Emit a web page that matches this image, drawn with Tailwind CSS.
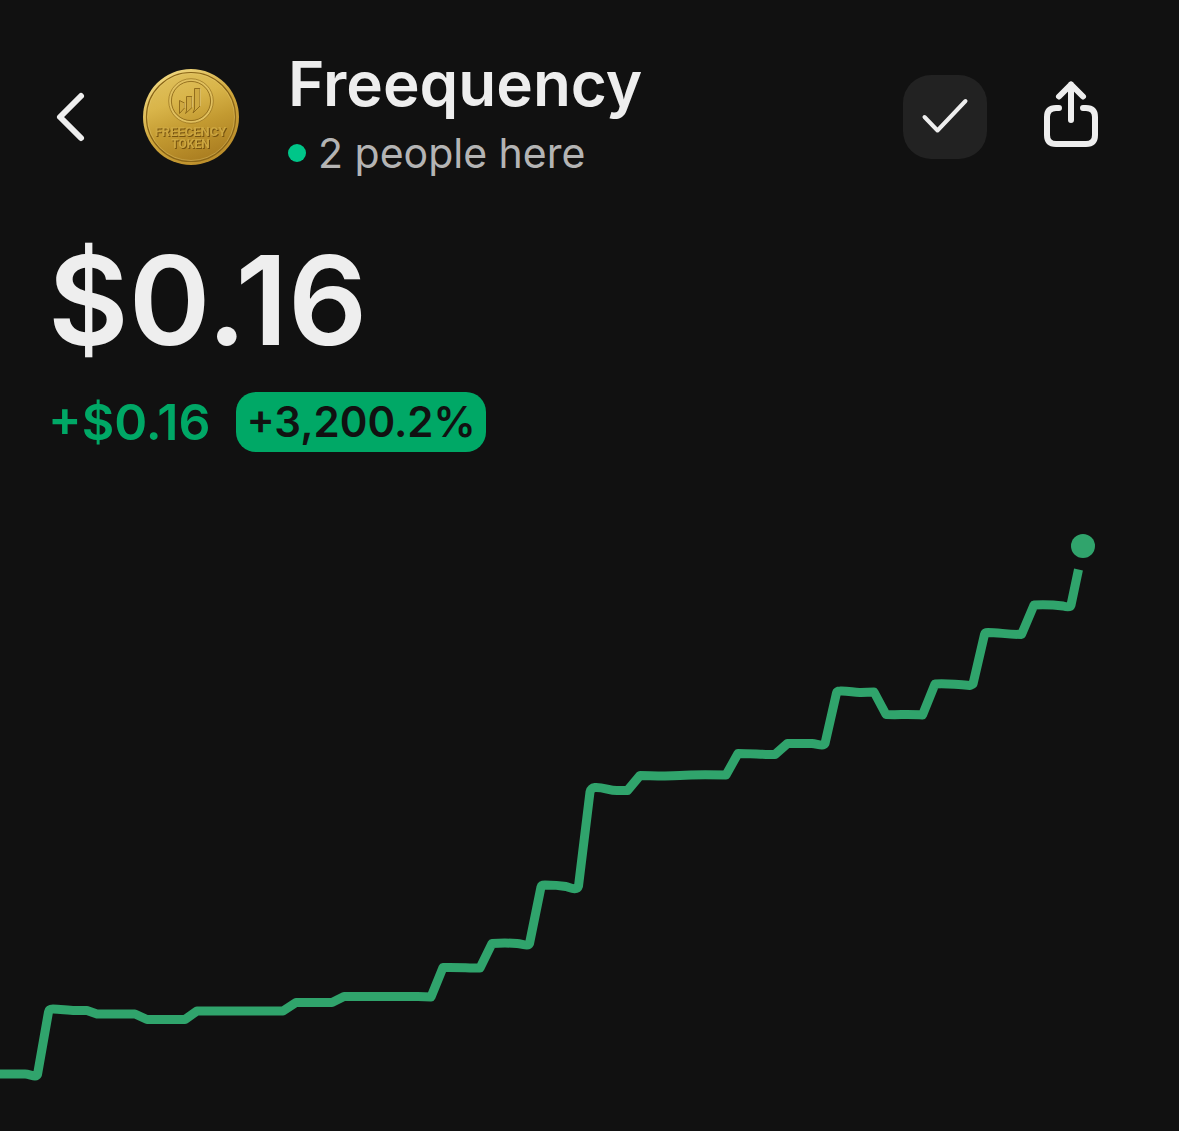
<!DOCTYPE html>
<html lang="en">
<head>
  <meta charset="UTF-8">
  <meta name="viewport" content="width=device-width, initial-scale=1.0">
  <title>Freequency</title>
  <script src="https://cdn.jsdelivr.net/npm/@tailwindcss/browser@4"></script>
</head>
<body class="bg-[#111111] text-[#eeeeee] font-['Inter','Liberation_Sans',sans-serif] overflow-x-hidden">
  <header class="flex items-center pt-12 pl-12 pr-16">
    <button type="button" aria-label="Back" class="shrink-0">
      <svg class="w-12 h-16" viewBox="0 0 48 64" fill="none" stroke="currentColor" stroke-width="6" stroke-linecap="round" stroke-linejoin="round">
        <path d="M33 11 L12 32 L33 53"/>
      </svg>
    </button>
    <!-- Token coin -->
    <svg class="ml-[46px] size-[98px] shrink-0" viewBox="0 0 98 98" role="img" aria-label="Freecency Token">
      <defs>
        <linearGradient id="gold" x1="0.3" y1="0" x2="0.65" y2="1">
          <stop offset="0" stop-color="#dfc05c"/>
          <stop offset="0.3" stop-color="#d9b54a"/>
          <stop offset="0.6" stop-color="#c39a31"/>
          <stop offset="1" stop-color="#a97c20"/>
        </linearGradient>
        <linearGradient id="rim" x1="0.2" y1="0" x2="0.8" y2="1">
          <stop offset="0" stop-color="#f3dc85"/>
          <stop offset="0.5" stop-color="#cfa63b"/>
          <stop offset="1" stop-color="#b98a28"/>
        </linearGradient>
      </defs>
      <circle cx="49" cy="49" r="48" fill="url(#rim)"/>
      <circle cx="49" cy="49" r="44.5" fill="url(#gold)" stroke="#8a6517" stroke-width="1.2"/>
      <circle cx="49" cy="49" r="43.5" fill="none" stroke="#ecd17a" stroke-opacity="0.5" stroke-width="0.7"/>
      <circle cx="49" cy="33" r="21" fill="none" stroke="#e0c05f" stroke-width="2.2"/>
      <circle cx="49" cy="33" r="22.3" fill="none" stroke="#8f6a1b" stroke-opacity="0.8" stroke-width="0.8"/>
      <circle cx="49" cy="33" r="19.6" fill="none" stroke="#8f6a1b" stroke-width="0.9"/>
      <g fill="#cfa941" stroke="#8a6518" stroke-width="0.9" stroke-linejoin="round">
        <path d="M37.500 32.500L42.500 35V40L37.500 45.500Z"/>
        <path d="M44.500 28.500H50V39.500L43.500 45.500L44.500 43Z"/>
        <path d="M52.500 20.500H58V38L51 45L52.500 41Z"/>
      </g>
      <path d="M42.800 35V40M50.400 28.500V39.500M58.400 20.500V38" stroke="#efd684" stroke-width="0.7"/>
      <g class="drop-shadow-[1px_1px_0_#765310]" font-family="Roboto, sans-serif" font-weight="700" text-anchor="middle" fill="#cda741">
        <text x="48.500" y="67.500" font-size="13">FREECENCY</text>
        <text x="48.500" y="80" font-size="12">TOKEN</text>
      </g>
    </svg>
    <div class="ml-12 flex-1 min-w-0">
      <h1 class="text-[62px] leading-[72px] font-semibold">Freequency</h1>
      <p class="flex items-center gap-3 text-[41px] leading-[66px] text-[#b4b4b4]">
        <span class="size-[18px] rounded-full bg-[#00c689]"></span>2 people here
      </p>
    </div>
    <button type="button" aria-label="Following" class="shrink-0 size-[84px] rounded-[28px] bg-[#222222]">
      <svg class="size-full" viewBox="0 0 84 84" fill="none" stroke="currentColor" stroke-width="4" stroke-linecap="round" stroke-linejoin="round">
        <path d="M21.500 42 L34.500 55.500 L62.500 26"/>
      </svg>
    </button>
    <button type="button" aria-label="Share" class="shrink-0 ml-11 size-[84px]">
      <svg class="size-full" viewBox="0 0 84 84" fill="none" stroke="currentColor" stroke-width="6" stroke-linecap="round" stroke-linejoin="round">
        <path d="M28 33H25Q16 33 16 42V60Q16 69 25 69H55Q64 69 64 60V42Q64 33 55 33H52"/>
        <path d="M40 45V9.500M28 21.500L40 9.500L52 21.500"/>
      </svg>
    </button>
  </header>

  <main>
    <section class="px-12 pt-12">
      <p class="text-[124px] leading-[132px] font-semibold">$0.16</p>
      <div class="flex items-center gap-[26px] pt-[26px]">
        <span class="text-[50px] leading-[60px] font-semibold text-[#00a866]">+$0.16</span>
        <span class="rounded-[20px] bg-[#00a866] px-[10px] text-[42px] leading-[60px] font-semibold text-[#111111]">+3,200.2%</span>
      </div>
    </section>

    <!-- Price chart -->
    <svg class="mt-12 block w-full h-auto" viewBox="0 500 1179 631" fill="none" role="img" aria-label="Price chart">
      <path stroke="#30a46c" stroke-width="9" stroke-linejoin="round" d="M0 1074H25C30 1074 36 1078 37.500 1074.500L48.500 1012Q49 1009 53 1009C60 1009 68 1010.500 75 1010.500H87L97 1014H135L147 1019.500H185L197 1011H283L296 1002.500H332L344 996.500H418L431 997L443 967.500C455 967 468 968 480 968L492 943.500C500 943 510 943 517 943.500C523 944 528 946.500 529.500 943.500L541 887Q541.500 885 545 885C553 885 560 885.500 566 886.500C571 888 577 891 578.500 886L590 792Q591 788 595 787.500C604 787 610 791 618 790.500H627.500L640 775.500C650 775.500 665 776.500 680 775.500C692 774.500 705 774.500 726 775L738 753.500C750 753.500 763 754.500 775 754.500L787.500 743.500H812C818 744 823 746.500 825 743.500L836.500 693Q837 691 840 691C848 690.500 855 693 861 692.500S870 692 874 692L886 714.500C898 715 910 714 922.500 715L935 684C947 683.500 960 684.500 970 685.500L973 684L984.500 634.500Q985 632.500 988 632.500C998 632.500 1008 634.500 1021.500 634.500L1034 605C1045 604.500 1055 605 1063 606Q1070 608 1071 605L1078.500 569.500"/>
      <circle cx="1083" cy="546" r="12" fill="#30a46c"/>
    </svg>
  </main>
</body>
</html>
